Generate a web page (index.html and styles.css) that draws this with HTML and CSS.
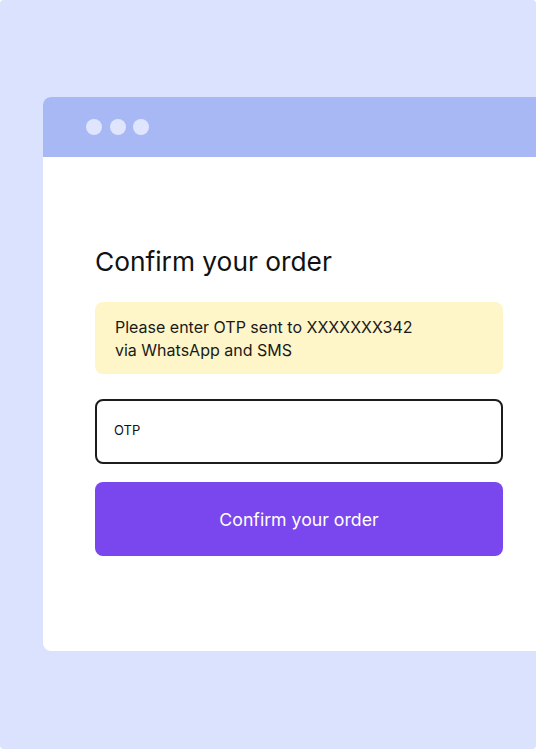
FILE: index.html
```
<!DOCTYPE html>
<html lang="en">
<head>
<meta charset="utf-8">
<title>Confirm your order</title>
<link rel="stylesheet" href="styles.css">
</head>
<body>
<div class="frame">
  <div class="window">
    <div class="titlebar">
      <span class="dot"></span>
      <span class="dot"></span>
      <span class="dot"></span>
    </div>
    <div class="content">
      <h1 class="title">Confirm your order</h1>
      <div class="notice">Please enter OTP sent to XXXXXXX342<br>via WhatsApp and SMS</div>
      <div class="field"><span class="field-label">OTP</span></div>
      <button class="submit" type="button">Confirm your order</button>
    </div>
  </div>
</div>
</body>
</html>
```
FILE: styles.css
```
* { box-sizing: border-box; }
html, body { margin: 0; padding: 0; background: #ffffff; }
body { font-family: "Inter", "Liberation Sans", sans-serif; color: #111111; }

.frame {
  width: 536px;
  height: 749px;
  background: #dbe2fe;
  border-radius: 4px;
  padding: 97px 0 0 43px;
  overflow: hidden;
}

.window {
  background: #ffffff;
  border-radius: 8px 0 0 8px;
  height: 554px;
  overflow: hidden;
}

.titlebar {
  height: 60px;
  background: #a8b8f4;
  display: flex;
  align-items: center;
  gap: 7.5px;
  padding-left: 43px;
}

.dot {
  width: 16px;
  height: 16px;
  border-radius: 50%;
  background: #dee5fd;
}

.content {
  padding: 88px 0 0 52px;
  width: 460px;
}

.title {
  margin: 0;
  font-size: 26.3px;
  font-weight: 400;
  line-height: 33px;
  color: #111111;
}

.notice {
  margin-top: 24px;
  background: #fef6c9;
  border-radius: 8px;
  padding: 14px 20px;
  font-size: 16px;
  line-height: 22.5px;
  height: 72px;
  color: #1a1a1a;
}

.field {
  margin-top: 25px;
  height: 65px;
  border: 2px solid #1c1c1c;
  border-radius: 8px;
  display: flex;
  align-items: center;
  padding: 0 0 3px 17px;
  font-size: 13px;
  color: #111111;
}

.submit {
  margin-top: 18px;
  display: block;
  width: 100%;
  height: 74px;
  border: 0;
  border-radius: 8px;
  background: #7a46ed;
  color: #ffffff;
  font-family: inherit;
  font-size: 17.7px;
  padding: 0;
}
```
